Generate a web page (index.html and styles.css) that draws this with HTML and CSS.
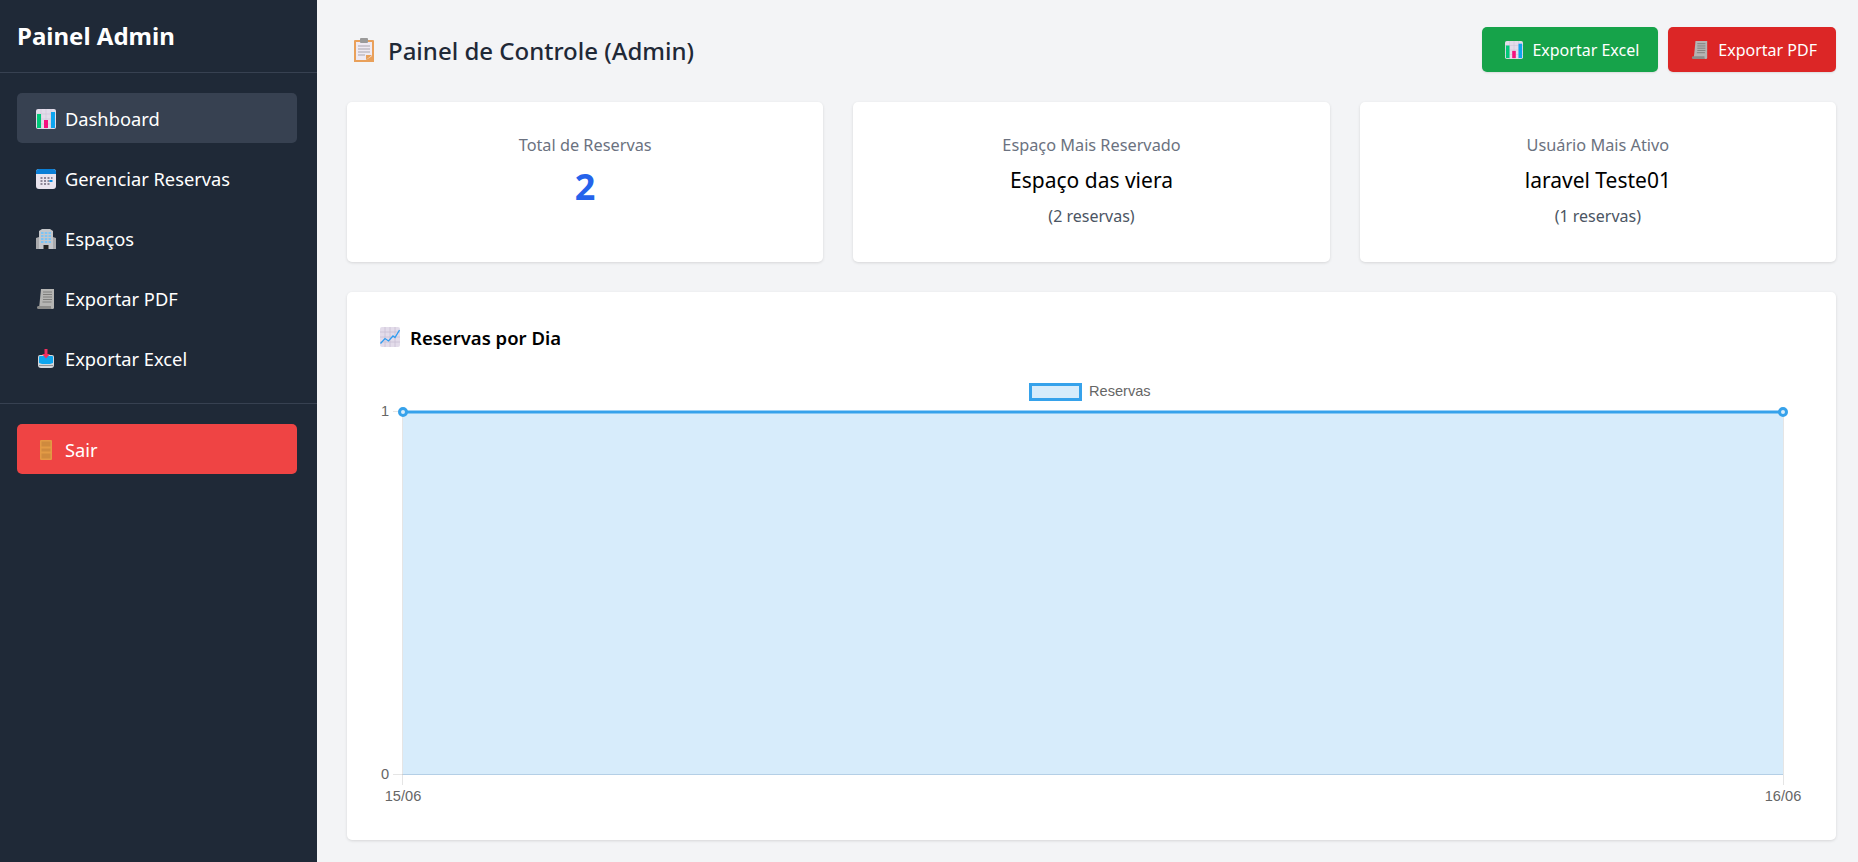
FILE: index.html
```html
<!DOCTYPE html>
<html lang="pt-BR">

<head>
    <meta charset="UTF-8">
    <meta name="viewport" content="width=device-width, initial-scale=1.0">
    <title>Painel Admin</title>
    <link rel="stylesheet" href="styles.css">
</head>

<body>
    <!-- emoji icons, drawn once and reused -->
    <svg class="defs" width="0" height="0">
        <symbol id="i-chart" viewBox="0 0 20 20">
            <rect width="20" height="20" rx="2" fill="#e3dcea"/>
            <path d="M0 5h20M0 10h20M0 15h20M5 0v20M10 0v20M15 0v20" stroke="#cfc6d8" stroke-width=".6"/>
            <rect x="1" y="5" width="4" height="14" fill="#00c878"/>
            <rect x="8" y="11" width="4" height="8" fill="#f5107f"/>
            <rect x="15" y="3" width="4" height="16" fill="#0ea5f0"/>
        </symbol>
        <symbol id="i-calendar" viewBox="0 0 20 20">
            <rect width="20" height="20" rx="3" fill="#e9e4ee"/>
            <path d="M0 5V3a3 3 0 0 1 3-3h14a3 3 0 0 1 3 3v2z" fill="#0a7fd6"/>
            <path d="M4.500 8h2v2h-2zM8 8h2v2H8zM11.500 8h2v2h-2zM15 8h1.500v2H15zM4.500 11h2v2h-2zM8 11h2v2H8zM11.500 11h2v2h-2zM4.500 14h2v2h-2zM8 14h2v2H8zM11.500 14h2v2h-2z" fill="#8d8798"/>
            <rect x="13.500" y="11" width="3" height="2" fill="#0a8fe6"/>
        </symbol>
        <symbol id="i-building" viewBox="0 0 20 20">
            <path d="M0 9l3-1v12H0zM20 9l-3-1v12h3z" fill="#a9aaad"/>
            <path d="M3 2l3-2h8l3 2v18H3z" fill="#c4c6ca"/>
            <path d="M5 3h2.500v2H5zM8.800 3h2.500v2H8.800zM12.500 3H15v2h-2.500zM5 6h2.500v2H5zM8.800 6h2.500v2H8.800zM12.500 6H15v2h-2.500zM5 9h2.500v2H5zM8.800 9h2.500v2H8.800zM12.500 9H15v2h-2.500zM5 12h2.500v2H5zM8.800 12h2.500v2H8.800zM12.500 12H15v2h-2.500z" fill="#7cc4f5"/>
            <rect x="7.500" y="16" width="5" height="4" fill="#222"/>
        </symbol>
        <symbol id="i-scroll" viewBox="0 0 20 20">
            <path d="M5 0h13v18.500a1.500 1.500 0 0 1-1.500 1.500H3z" fill="#b5b5b3"/>
            <path d="M3 17h12v1.500a1.500 1.500 0 0 0 1.500 1.500h-14A1.500 1.500 0 0 1 1 18.500 1.500 1.500 0 0 1 3 17z" fill="#8c8c8a"/>
            <path d="M7 3h9M7 5.500h9M7 8h9M7 10.500h9M6.500 13h9" stroke="#7e7e7c" stroke-width="1"/>
        </symbol>
        <symbol id="i-inbox" viewBox="0 0 20 20">
            <path d="M4 6h12a2 2 0 0 1 2 2v8a3 3 0 0 1-3 3H5a3 3 0 0 1-3-3V8a2 2 0 0 1 2-2z" fill="#d5d8dc"/>
            <path d="M4 7h12a1 1 0 0 1 1 1v6l-3 1H6l-3-1V8a1 1 0 0 1 1-1z" fill="#0ea5ee"/>
            <path d="M8.500 0h3v5H14l-4 4.500L6 5h2.500z" fill="#f0305f"/>
            <path d="M3 16.500h14" stroke="#8f9296" stroke-width="1"/>
        </symbol>
        <symbol id="i-door" viewBox="0 0 20 20">
            <rect x="4" width="12" height="20" rx="1" fill="#e39a45"/>
            <path d="M5.500 1.500h9v5h-9zM5.500 8.500h9v3h-9zM5.500 13.500h9v5h-9z" fill="#cf8a3e"/>
        </symbol>
        <symbol id="i-clipboard" viewBox="0 0 20 24">
            <path d="M1 2h18a1 1 0 0 1 1 1v21H0V3a1 1 0 0 1 1-1z" fill="#e9a05a"/>
            <path d="M2 4h16v14l-6 4H2z" fill="#efeaf3"/>
            <path d="M12 22v-5h6z" fill="#e9a05a"/>
            <rect x="6" width="8" height="5" rx="1" fill="#9a9a9a"/>
            <path d="M4 8h12M4 11h12M4 14h12M4 17h7" stroke="#a9a5ae" stroke-width="1"/>
        </symbol>
        <symbol id="i-trend" viewBox="0 0 20 20">
            <rect width="20" height="20" rx="2" fill="#e3dcea"/>
            <path d="M0 5h20M0 10h20M0 15h20M5 0v20M10 0v20M15 0v20" stroke="#c9bfd4" stroke-width=".8"/>
            <path d="M.5 16.500L5 11.500l3.500 2.500L13 9l2 1.500L19.500 3" fill="none" stroke="#2f9cf0" stroke-width="1.300"/>
        </symbol>
    </svg>

    <div class="layout">
        <aside class="sidebar">
            <div class="brand">Painel Admin</div>
            <nav class="menu">
                <a class="menu-item active" href="#"><svg class="icon"><use href="#i-chart"/></svg>Dashboard</a>
                <a class="menu-item" href="#"><svg class="icon"><use href="#i-calendar"/></svg>Gerenciar Reservas</a>
                <a class="menu-item" href="#"><svg class="icon"><use href="#i-building"/></svg>Espaços</a>
                <a class="menu-item" href="#"><svg class="icon"><use href="#i-scroll"/></svg>Exportar PDF</a>
                <a class="menu-item" href="#"><svg class="icon"><use href="#i-inbox"/></svg>Exportar Excel</a>
            </nav>
            <div class="logout">
                <a class="menu-item danger" href="#"><svg class="icon"><use href="#i-door"/></svg>Sair</a>
            </div>
        </aside>

        <main class="content">
            <header class="topbar">
                <h1><svg class="icon-tall"><use href="#i-clipboard"/></svg>Painel de Controle (Admin)</h1>
                <div class="actions">
                    <a class="btn btn-green" href="#"><svg class="icon-sm"><use href="#i-chart"/></svg>Exportar Excel</a>
                    <a class="btn btn-red" href="#"><svg class="icon-sm"><use href="#i-scroll"/></svg>Exportar PDF</a>
                </div>
            </header>

            <section class="cards">
                <div class="card">
                    <p class="card-label">Total de Reservas</p>
                    <p class="card-number">2</p>
                </div>
                <div class="card">
                    <p class="card-label">Espaço Mais Reservado</p>
                    <p class="card-value">Espaço das viera</p>
                    <p class="card-note">(2 reservas)</p>
                </div>
                <div class="card">
                    <p class="card-label">Usuário Mais Ativo</p>
                    <p class="card-value">laravel Teste01</p>
                    <p class="card-note">(1 reservas)</p>
                </div>
            </section>

            <section class="chart-card">
                <h2><svg class="icon"><use href="#i-trend"/></svg>Reservas por Dia</h2>
                <svg class="chart" width="1489" height="450" viewBox="347 370 1489 450">
                    <!-- legend -->
                    <rect x="1030.500" y="384.500" width="50" height="15" fill="#d7ecfb" stroke="#36a2eb" stroke-width="3"/>
                    <text class="legend" x="1089" y="396">Reservas</text>
                    <!-- area -->
                    <rect x="403" y="412" width="1380" height="362" fill="#d7ecfb"/>
                    <path d="M403 774.500h1380" stroke="#b4cfe6" stroke-width="1"/>
                    <!-- grid ticks -->
                    <path d="M393 411.500h10M393 774.500h10M402.500 412v373M1783.500 412v373" stroke="rgba(0,0,0,0.1)" stroke-width="1"/>
                    <!-- line and points -->
                    <path d="M403 412h1380" stroke="#36a2eb" stroke-width="3"/>
                    <circle cx="403" cy="412" r="3.500" fill="#d7ecfb" stroke="#36a2eb" stroke-width="3"/>
                    <circle cx="1783" cy="412" r="3.500" fill="#d7ecfb" stroke="#36a2eb" stroke-width="3"/>
                    <!-- axis labels -->
                    <text class="tick" x="389" y="416" text-anchor="end">1</text>
                    <text class="tick" x="389" y="779" text-anchor="end">0</text>
                    <text class="tick" x="403" y="801" text-anchor="middle">15/06</text>
                    <text class="tick" x="1783" y="801" text-anchor="middle">16/06</text>
                </svg>
            </section>
        </main>
    </div>
</body>

</html>
```

FILE: styles.css
```css
* {
    box-sizing: border-box;
}

html,
body {
    height: 100%;
}

body {
    font-family: 'Noto Sans', sans-serif;
    background-color: #f3f4f6;
    margin: 0;
    color: #1f2937;
    overflow: hidden;
}

a {
    text-decoration: none;
}

.defs {
    display: block;
    height: 0;
}

.layout {
    display: flex;
    height: 862px;
}

.icon {
    width: 20px;
    height: 20px;
    flex-shrink: 0;
}

.icon-sm {
    width: 18px;
    height: 18px;
    flex-shrink: 0;
}

.icon-tall {
    width: 20px;
    height: 24px;
    flex-shrink: 0;
}

/* sidebar */
.sidebar {
    width: 317px;
    flex-shrink: 0;
    background-color: #1f2937;
}

.brand {
    height: 73px;
    padding: 18px 17px 0;
    font-size: 24px;
    line-height: 36px;
    font-weight: 700;
    color: #fff;
    border-bottom: 1px solid #374151;
}

.menu {
    display: flex;
    flex-direction: column;
    gap: 10px;
    padding: 20px 20px 20px 17px;
    height: 331px;
    border-bottom: 1px solid #374151;
}

.menu-item {
    display: flex;
    align-items: center;
    gap: 9px;
    height: 50px;
    padding: 1px 19px 0;
    font-size: 18.300px;
    color: #fff;
    border-radius: 5px;
}

.menu-item.active {
    background-color: #374151;
}

.menu-item.danger {
    background-color: #ef4444;
}

.logout {
    padding: 20px 20px 0 17px;
}

/* main */
.content {
    flex: 1;
    padding: 27px 22px 0 30px;
}

.topbar {
    display: flex;
    justify-content: space-between;
    align-items: center;
    height: 45px;
}

.topbar h1 {
    display: flex;
    align-items: center;
    gap: 14px;
    margin: 0 0 0 7px;
    padding-top: 1px;
    font-size: 24px;
    font-weight: 500;
}

.actions {
    display: flex;
    gap: 10px;
}

.btn {
    display: flex;
    align-items: center;
    gap: 9px;
    height: 45px;
    padding: 1px 19px 0 23px;
    font-size: 16px;
    color: #fff;
    border-radius: 5px;
    box-shadow: 0 1px 2px rgba(0, 0, 0, 0.1);
}

.btn-green {
    background-color: #16a34a;
}

.btn-red {
    background-color: #dc2626;
}

.cards {
    display: grid;
    grid-template-columns: repeat(3, 1fr);
    gap: 30px;
    margin-top: 30px;
}

.card {
    height: 160px;
    padding-top: 31px;
    background: #fff;
    border-radius: 5px;
    box-shadow: 0 1px 3px rgba(0, 0, 0, 0.12);
    text-align: center;
}

.card-label {
    margin: 0;
    font-size: 16.300px;
    line-height: 24px;
    color: #6b7280;
}

.card-number {
    margin: 6px 0 0;
    font-size: 36px;
    line-height: 48px;
    font-weight: 700;
    color: #2563eb;
}

.card-value {
    margin: 8px 0 0;
    font-size: 21px;
    line-height: 30px;
    color: #000;
}

.card-note {
    margin: 9px 0 0;
    font-size: 16px;
    line-height: 24px;
    color: #4b5563;
}

.chart-card {
    height: 548px;
    margin-top: 30px;
    padding-top: 30px;
    background: #fff;
    border-radius: 5px;
    box-shadow: 0 1px 3px rgba(0, 0, 0, 0.12);
}

.chart-card h2 {
    display: flex;
    align-items: center;
    gap: 10px;
    height: 30px;
    margin: 0 0 18px 33px;
    font-size: 18.500px;
    font-weight: 600;
    color: #000;
}

.chart {
    display: block;
}

.legend,
.tick {
    font-family: 'Liberation Sans', sans-serif;
    font-size: 14.600px;
    fill: #666;
}
```
